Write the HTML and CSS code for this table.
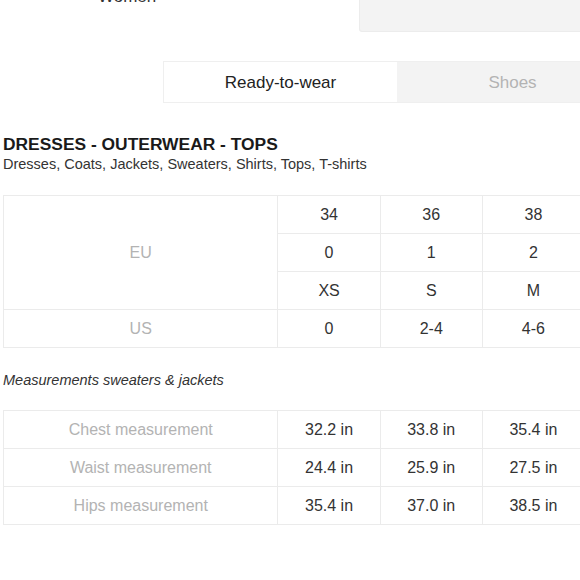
FILE: index.html
```html
<!DOCTYPE html>
<html>
<head>
<meta charset="utf-8">
<link rel="stylesheet" href="styles.css">
</head>
<body>
<div class="page">
  <div class="top">
    <div class="gender">Women</div>
    <div class="select"></div>
  </div>
  <div class="tabs">
    <div class="tab active">Ready-to-wear</div>
    <div class="tab">Shoes</div>
  </div>
  <h2 class="title">DRESSES - OUTERWEAR - TOPS</h2>
  <p class="subtitle">Dresses, Coats, Jackets, Sweaters, Shirts, Tops, T-shirts</p>
  <table class="grid">
    <colgroup><col class="c-label"><col class="c-val"><col class="c-val"><col class="c-val"></colgroup>
    <tr><td class="label" rowspan="3">EU</td><td>34</td><td>36</td><td>38</td></tr>
    <tr><td>0</td><td>1</td><td>2</td></tr>
    <tr><td>XS</td><td>S</td><td>M</td></tr>
    <tr><td class="label">US</td><td>0</td><td>2-4</td><td>4-6</td></tr>
  </table>
  <p class="note">Measurements sweaters &amp; jackets</p>
  <table class="grid">
    <colgroup><col class="c-label"><col class="c-val"><col class="c-val"><col class="c-val"></colgroup>
    <tr><td class="label">Chest measurement</td><td>32.2 in</td><td>33.8 in</td><td>35.4 in</td></tr>
    <tr><td class="label">Waist measurement</td><td>24.4 in</td><td>25.9 in</td><td>27.5 in</td></tr>
    <tr><td class="label">Hips measurement</td><td>35.4 in</td><td>37.0 in</td><td>38.5 in</td></tr>
  </table>
</div>
</body>
</html>
```
FILE: styles.css
```css
html, body {
  margin: 0;
  padding: 0;
  background: #ffffff;
  overflow: hidden;
  width: 580px;
  height: 580px;
}
.page {
  font-family: "Liberation Sans", Arial, sans-serif;
  color: #333;
  padding-left: 3px;
  width: 640px;
}
.top {
  display: flex;
  height: 33px;
  margin-top: -1px;
}
.gender {
  margin-left: 95px;
  margin-top: -11px;
  font-size: 17px;
  line-height: 17px;
  height: 17px;
  color: #333;
  width: 260px;
}
.select {
  margin-left: 1px;
  flex: 0 0 240px;
  background: #f3f3f3;
  border: 1px solid #ececec;
  border-top: none;
  border-radius: 0 0 0 3px;
}
.tabs {
  display: flex;
  margin-top: 29px;
  margin-left: 160px;
  width: 466px;
  height: 42px;
  border: 1px solid #efefef;
  box-sizing: border-box;
}
.tab {
  display: flex;
  align-items: center;
  justify-content: center;
  font-size: 17px;
  color: #b3b3b3;
  background: #f3f3f3;
  flex: 1;
  padding-top: 2px;
}
.tab.active {
  background: #fff;
  color: #222;
  flex: 0 0 233px;
}
.title {
  margin: 30px 0 0 0;
  font-size: 17.4px;
  font-weight: bold;
  color: #1a1a1a;
  line-height: 22px;
}
.subtitle {
  margin: 1px 0 0 0;
  font-size: 14.5px;
  color: #333;
  line-height: 17px;
}
.grid {
  border-collapse: collapse;
  margin-top: 22px;
  table-layout: fixed;
  width: 582px;
}
.c-label { width: 274px; }
.c-val { width: 102px; }
.grid td {
  border: 1px solid #ebebeb;
  height: 37px;
  padding: 0;
  text-align: center;
  font-size: 16px;
  color: #333;
}
.grid td.label {
  color: #b3b3b3;
}
.note {
  margin: 24px 0 0 0;
  font-size: 14.5px;
  font-style: italic;
  color: #333;
  line-height: 17px;
}
.note + .grid {
  margin-top: 21px;
}
```
